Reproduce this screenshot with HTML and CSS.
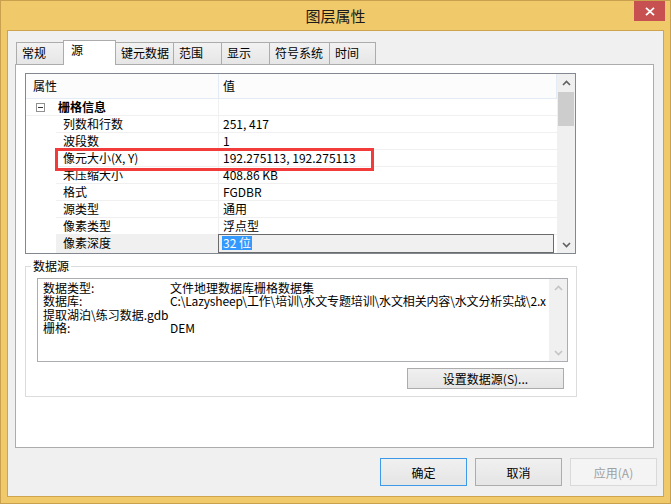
FILE: index.html
```html
<!DOCTYPE html>
<html lang="zh-CN">
<head>
<meta charset="utf-8">
<title>图层属性</title>
<link rel="stylesheet" href="styles.css">
</head>
<body>
<div class="window">
  <div class="titlebar">
    <span></span>
    <div class="title">图层属性</div>
    <div class="close">
      <svg width="10" height="9" viewBox="0 0 10 9"><path d="M1 0.8 L9 8.2 M9 0.8 L1 8.2" stroke="#fff" stroke-width="1.8" fill="none"/></svg>
    </div>
  </div>
  <div class="client">
    <div class="tabs">
      <div class="tab w48">常规</div>
      <div class="tab active w53">源</div>
      <div class="tab w59">键元数据</div>
      <div class="tab w49">范围</div>
      <div class="tab w49">显示</div>
      <div class="tab w61">符号系统</div>
      <div class="tab w47">时间</div>
    </div>
    <div class="pane">
      <div class="grid">
        <div class="gbody">
          <div class="ghead"><div class="h1">属性</div><div class="h2">值</div></div>
          <div class="row group"><div class="ind"><span class="minus"></span></div><div class="name">栅格信息</div><div class="val"></div></div>
          <div class="row"><div class="ind"></div><div class="name">列数和行数</div><div class="val">251, 417</div></div>
          <div class="row"><div class="ind"></div><div class="name">波段数</div><div class="val">1</div></div>
          <div class="row"><div class="ind"></div><div class="name">像元大小(X, Y)</div><div class="val">192.275113, 192.275113</div></div>
          <div class="row"><div class="ind"></div><div class="name">未压缩大小</div><div class="val">408.86 KB</div></div>
          <div class="row"><div class="ind"></div><div class="name">格式</div><div class="val">FGDBR</div></div>
          <div class="row"><div class="ind"></div><div class="name">源类型</div><div class="val">通用</div></div>
          <div class="row"><div class="ind"></div><div class="name">像素类型</div><div class="val">浮点型</div></div>
          <div class="row sel"><div class="ind"></div><div class="name">像素深度</div><div class="val"><span class="hl">32 位</span></div></div>
        </div>
        <div class="vscroll">
          <div class="sbtn"><svg width="9" height="6" viewBox="0 0 9 6"><polyline points="1,5 4.5,1.5 8,5" stroke="#606060" stroke-width="1.6" fill="none"/></svg></div>
          <div class="thumb"></div>
          <div class="sfill"></div>
          <div class="sbtn"><svg width="9" height="6" viewBox="0 0 9 6"><polyline points="1,1 4.5,4.5 8,1" stroke="#606060" stroke-width="1.6" fill="none"/></svg></div>
        </div>
        <div class="mark"></div>
      </div>
      <fieldset class="ds">
        <legend>数据源</legend>
        <div class="tb">
          <div class="tb-text">
            <div class="line"><span class="lab">数据类型:</span><span>文件地理数据库栅格数据集</span></div>
            <div class="line"><span class="lab">数据库:</span><span class="path">C:\Lazysheep\工作\培训\水文专题培训\水文相关内容\水文分析实战\2.x</span></div>
            <div class="line"><span>提取湖泊\练习数据.gdb</span></div>
            <div class="line"><span class="lab">栅格:</span><span>DEM</span></div>
          </div>
          <div class="tb-sb">
            <div class="sbtn"><svg width="9" height="6" viewBox="0 0 9 6"><polyline points="1,5 4.5,1.5 8,5" stroke="#c4c4c4" stroke-width="1.6" fill="none"/></svg></div>
            <div class="sbtn"><svg width="9" height="6" viewBox="0 0 9 6"><polyline points="1,1 4.5,4.5 8,1" stroke="#c4c4c4" stroke-width="1.6" fill="none"/></svg></div>
          </div>
        </div>
        <div class="ds-actions"><div class="btn">设置数据源(S)...</div></div>
      </fieldset>
    </div>
    <div class="actions">
      <div class="abtn default">确定</div>
      <div class="abtn">取消</div>
      <div class="abtn disabled">应用(A)</div>
    </div>
  </div>
</div>
</body>
</html>
```
FILE: styles.css
```css
* { box-sizing: border-box; }
html, body { margin: 0; }
body {
  font-family: "Noto Sans CJK SC", "Microsoft YaHei", sans-serif;
  font-size: 12px;
  color: #000;
  background: #f0c96b;
}
.window {
  width: 671px;
  height: 504px;
  border: 1px solid #c9a04e;
  background: #f0c96b;
  display: flex;
  flex-direction: column;
}
.titlebar {
  height: 29px;
  display: grid;
  grid-template-columns: 1fr auto 1fr;
  align-items: center;
}
.title {
  font-size: 15px;
  color: #1a1a1a;
  line-height: 29px;
}
.close {
  justify-self: end;
  align-self: start;
  width: 31px;
  height: 20px;
  margin-right: 5px;
  background: #c75050;
  display: flex;
  align-items: center;
  justify-content: center;
}
.client {
  flex: 1;
  margin: 0 6px 6px;
  border: 1px solid #d0a44f;
  background: #f0f0f0;
  display: flex;
  flex-direction: column;
}
.tabs {
  display: flex;
  align-items: flex-end;
  height: 24px;
  margin: 9px 0 0 8px;
}
.tab {
  height: 22px;
  border: 1px solid #acacac;
  border-bottom: 0;
  background: linear-gradient(#f2f2f2, #e6e6e6);
  margin-right: -1px;
  padding-left: 5px;
  line-height: 20px;
  white-space: nowrap;
}
.tab.active {
  height: 25px;
  margin-bottom: -1px;
  background: #fff;
  position: relative;
  z-index: 1;
  padding-left: 7px;
  line-height: 18px;
}
.w47 { width: 47px; }
.w48 { width: 48px; }
.w49 { width: 49px; }
.w53 { width: 53px; }
.w59 { width: 59px; }
.w61 { width: 61px; }
.pane {
  margin: 0 9px 0 7px;
  height: 384px;
  border: 1px solid #acacac;
  background: #fff;
}
.grid {
  position: relative;
  margin: 8px 0 0 9px;
  width: 551px;
  height: 181px;
  border: 1px solid #828790;
  display: flex;
}
.gbody { width: 531px; }
.ghead {
  display: grid;
  grid-template-columns: 192px 1fr;
  height: 25px;
  border-bottom: 1px solid #e3ebf5;
  background: #fcfcfc;
  line-height: 24px;
}
.ghead .h1 { padding-left: 7px; }
.ghead .h2 {
  border-left: 1px solid #e3ebf5;
  border-right: 1px solid #e3ebf5;
  padding-left: 4px;
}
.row {
  display: grid;
  grid-template-columns: 30px 162px 1fr;
  height: 17px;
  line-height: 16px;
}
.row > div { border-bottom: 1px solid #f0f0f0; white-space: nowrap; }
.row > .ind { border-bottom-color: transparent; }
.row.group > .ind {
  border-bottom-color: #f0f0f0;
  display: flex;
  align-items: center;
  padding-left: 10px;
}
.minus {
  width: 9px;
  height: 9px;
  border: 1px solid #919191;
  display: flex;
  align-items: center;
  justify-content: center;
}
.minus::after {
  content: "";
  width: 5px;
  height: 1px;
  background: #333;
}
.name { padding-left: 7px; }
.group .name { padding-left: 2px; font-weight: bold; }
.val {
  border-left: 1px solid #f0f0f0;
  padding-left: 4px;
}
.row.sel .name { background: #f0f0f0; }
.row.sel .val {
  border: 1px solid #6b6b6b;
  background: #f0f0f0;
  margin: -1px 3px 0 0;
  height: 19px;
  padding-left: 3px;
  line-height: 16px;
}
.hl {
  display: inline-block;
  background: #3399ff;
  color: #fff;
  line-height: 14px;
  padding: 0 1px;
}
.vscroll {
  width: 18px;
  background: #f0f0f0;
  display: flex;
  flex-direction: column;
}
.sbtn {
  height: 17px;
  display: flex;
  align-items: center;
  justify-content: center;
}
.thumb {
  height: 34px;
  margin: 1px 1px 0;
  background: #cdcdcd;
}
.sfill { flex: 1; }
.mark {
  position: absolute;
  left: 29px;
  top: 74px;
  width: 319px;
  height: 23px;
  border: 3px solid #f23b3b;
}
.ds {
  margin: 4px 0 0 9px;
  width: 552px;
  min-width: 0;
  border: 1px solid #dcdcdc;
  padding: 0;
}
.ds legend {
  margin-left: 5px;
  padding: 0 2px;
  line-height: 16px;
}
.tb {
  margin: 4px 8px 0 11px;
  height: 84px;
  border: 1px solid #abadb3;
  display: flex;
}
.tb-text {
  flex: 1;
  min-width: 0;
  padding: 2px 0 0 5px;
  line-height: 13.4px;
  overflow: hidden;
  white-space: nowrap;
}
.line { display: flex; height: 13.4px; }
.lab { width: 127px; flex: none; }
.path { letter-spacing: -0.15px; }
.tb-sb {
  width: 18px;
  flex: none;
  background: #f0f0f0;
  display: flex;
  flex-direction: column;
  justify-content: space-between;
}
.ds-actions {
  display: flex;
  justify-content: flex-end;
  margin: 6px 12px 7px 0;
}
.btn {
  width: 157px;
  height: 21px;
  border: 1px solid #acacac;
  background: linear-gradient(#f0f0f0, #e5e5e5);
  display: flex;
  align-items: center;
  justify-content: center;
}
.actions {
  display: flex;
  justify-content: flex-end;
  gap: 8px;
  margin: 10px 6px 0 0;
}
.abtn {
  width: 87px;
  height: 28px;
  border: 1px solid #acacac;
  background: linear-gradient(#f0f0f0, #e5e5e5);
  display: flex;
  align-items: center;
  justify-content: center;
}
.abtn.default { border-color: #3c9ae8; }
.abtn.disabled {
  border-color: #d9d9d9;
  background: #f4f4f4;
  color: #a0a0a0;
}
```
